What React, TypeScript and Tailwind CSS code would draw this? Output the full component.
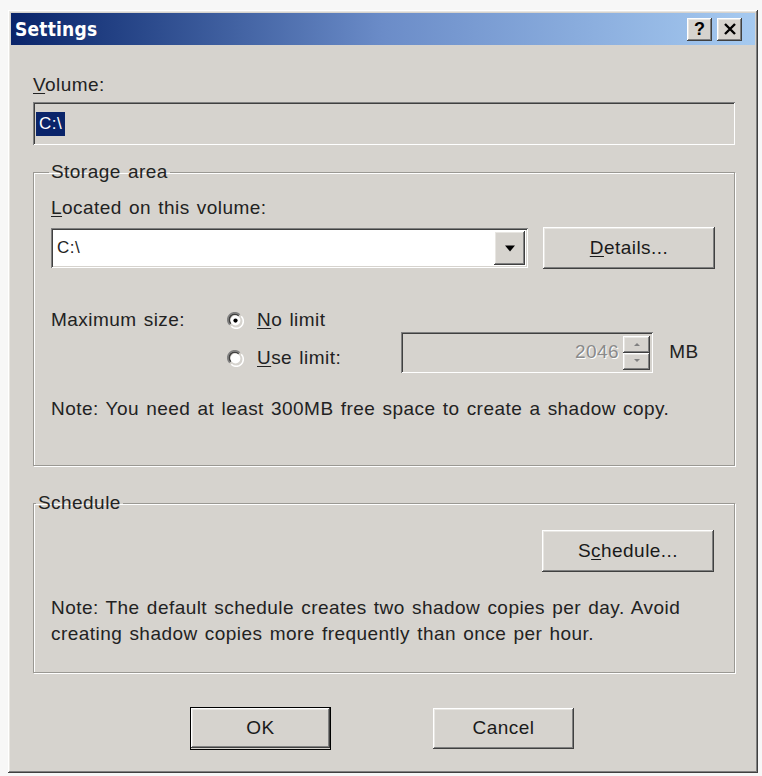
import React from "react";

// classic 3D bevels
const raised =
  "bg-[#d6d3ce] shadow-[inset_-1px_-1px_#404040,inset_1px_1px_#ffffff,inset_-2px_-2px_#808080,inset_2px_2px_#e8e6e2]";
const sunken =
  "shadow-[inset_1px_1px_#808080,inset_-1px_-1px_#ffffff,inset_2px_2px_#404040,inset_-2px_-2px_#d6d3ce]";

const font = { fontFamily: '"Liberation Sans", Arial, sans-serif', wordSpacing: "1.5px" };

function Radio({ checked }: { checked?: boolean }) {
  return (
    <svg width="17" height="17" viewBox="0 0 16 16" className="shrink-0">
      <path d="M12 2.6A6.5 6.5 0 0 0 2.6 12" stroke="#808080" strokeWidth="1.5" fill="none" />
      <path d="M10.9 3.6A5 5 0 0 0 3.6 10.9" stroke="#404040" strokeWidth="1.5" fill="none" />
      <path d="M4 13.4A6.5 6.5 0 0 0 13.4 4" stroke="#ffffff" strokeWidth="1.5" fill="none" />
      <circle cx="8" cy="8" r="4.6" fill="#ffffff" />
      {checked && <circle cx="8" cy="8" r="2" fill="#000" />}
    </svg>
  );
}

function Button({ children, className = "" }: { children: React.ReactNode; className?: string }) {
  return (
    <div className={`${raised} flex items-center justify-center text-[19px] text-[#1a1a1a] ${className}`}>
      {children}
    </div>
  );
}

export default function App() {
  return (
    <div className="w-[762px] h-[776px] bg-[#f7f7f7] pt-[10px] pl-[8px]" style={font}>
      <div className={`${raised} w-[750px] h-[763px] p-[3px] flex flex-col`}>
        {/* title bar */}
        <div className="h-[32px] flex items-center justify-between pl-[4px] pr-[13px] bg-gradient-to-r from-[#0a246a] via-[#6b8cc8] to-[#a6caf0]">
          <span className="text-white font-bold text-[19px] tracking-[0.2px]" style={{ fontFamily: '"DejaVu Sans Condensed", "DejaVu Sans", sans-serif' }}>
            Settings
          </span>
          <div className="flex gap-[5px]">
            <div className={`${raised} w-[25px] h-[23px] flex items-center justify-center text-[18px] font-bold text-black leading-none`}>
              ?
            </div>
            <div className={`${raised} w-[25px] h-[23px] flex items-center justify-center`}>
              <svg width="12" height="12" viewBox="0 0 12 12">
                <path d="M1 1L11 11M11 1L1 11" stroke="#000" strokeWidth="2.4" />
              </svg>
            </div>
          </div>
        </div>

        <div className="flex flex-col pl-[22px] pr-[14px] text-[19px] tracking-[0.45px] text-[#222]">
          {/* volume */}
          <div className="mt-[30px] leading-[20px]">
            <span className="underline underline-offset-2">V</span>olume:
          </div>
          <div className={`${sunken} mt-[7px] h-[43px] w-[702px] flex items-center pl-[3px]`}>
            <span className="bg-[#0a246a] text-white px-[3px] h-[24px] leading-[24px] text-[17px]">C:\</span>
          </div>

          {/* storage area */}
          <fieldset className="mt-[17px] w-[702px] h-[304px] border border-[#9a9893] shadow-[inset_1px_1px_#ffffff,1px_1px_#ffffff] px-[17px] pt-0 pb-0">
            <legend className="px-[2px] ml-[-2px] leading-[20px]">Storage area</legend>
            <div className="mt-[16px] leading-[20px]">
              <span className="underline underline-offset-2">L</span>ocated on this volume:
            </div>
            <div className="mt-[9px] flex items-center">
              <div className={`${sunken} bg-white w-[477px] h-[40px] flex items-center pl-[6px] pr-[3px] justify-between`}>
                <span className="text-[17px]">C:\</span>
                <div className={`${raised} w-[31px] h-[34px] flex items-center justify-center`}>
                  <svg width="12" height="7" viewBox="0 0 12 7">
                    <path d="M1 0.5H11L6 6.5Z" fill="#000" />
                  </svg>
                </div>
              </div>
              <Button className="ml-[15px] w-[172px] h-[42px]">
                <span>
                  <span className="underline underline-offset-2">D</span>etails...
                </span>
              </Button>
            </div>

            <div className="mt-[40px] flex">
              <div className="w-[176px] leading-[20px] pt-[1px]">Maximum size:</div>
              <div className="flex flex-col gap-[18px] pt-[1px]">
                <div className="flex items-center gap-[13px] leading-[20px]">
                  <Radio checked />
                  <span>
                    <span className="underline underline-offset-2">N</span>o limit
                  </span>
                </div>
                <div className="flex items-center gap-[13px] leading-[20px]">
                  <Radio />
                  <span>
                    <span className="underline underline-offset-2">U</span>se limit:
                  </span>
                </div>
              </div>
              <div className="ml-[60px] mt-[23px] flex items-center">
                <div className={`${sunken} w-[252px] h-[41px] flex items-center justify-end pr-[3px]`}>
                  <span className="text-[#8a8a8a] [text-shadow:1px_1px_#ffffff] mr-[4px]">2046</span>
                  <div className="flex flex-col">
                    {[0, 1].map((i) => (
                      <div key={i} className={`${raised} w-[27px] h-[17px] flex items-center justify-center`}>
                        <svg width="6" height="4" viewBox="0 0 6 4">
                          <path d={i === 0 ? "M0 4H6L3 1Z" : "M0 0H6L3 3Z"} fill="#808080" />
                        </svg>
                      </div>
                    ))}
                  </div>
                </div>
                <span className="ml-[16px]">MB</span>
              </div>
            </div>

            <div className="mt-[26px] leading-[20px]">Note: You need at least 300MB free space to create a shadow copy.</div>
          </fieldset>

          {/* schedule */}
          <fieldset className="mt-[27px] w-[702px] h-[180px] border border-[#9a9893] shadow-[inset_1px_1px_#ffffff,1px_1px_#ffffff] px-[17px] pt-0 pb-0">
            <legend className="px-[2px] ml-[-15px] leading-[20px]">Schedule</legend>
            <div className="flex justify-end mt-[17px] pr-[3px]">
              <Button className="w-[172px] h-[42px]">
                <span>
                  S<span className="underline underline-offset-2">c</span>hedule...
                </span>
              </Button>
            </div>
            <div className="mt-[23px] leading-[26px]">
              Note: The default schedule creates two shadow copies per day. Avoid
              <br />
              creating shadow copies more frequently than once per hour.
            </div>
          </fieldset>

          {/* footer buttons */}
          <div className="mt-[35px] flex pl-[158px] gap-[103px]">
            <div className="outline outline-1 outline-black">
              <Button className="w-[139px] h-[40px]">OK</Button>
            </div>
            <Button className="w-[141px] h-[41px]">Cancel</Button>
          </div>
        </div>
      </div>
    </div>
  );
}
